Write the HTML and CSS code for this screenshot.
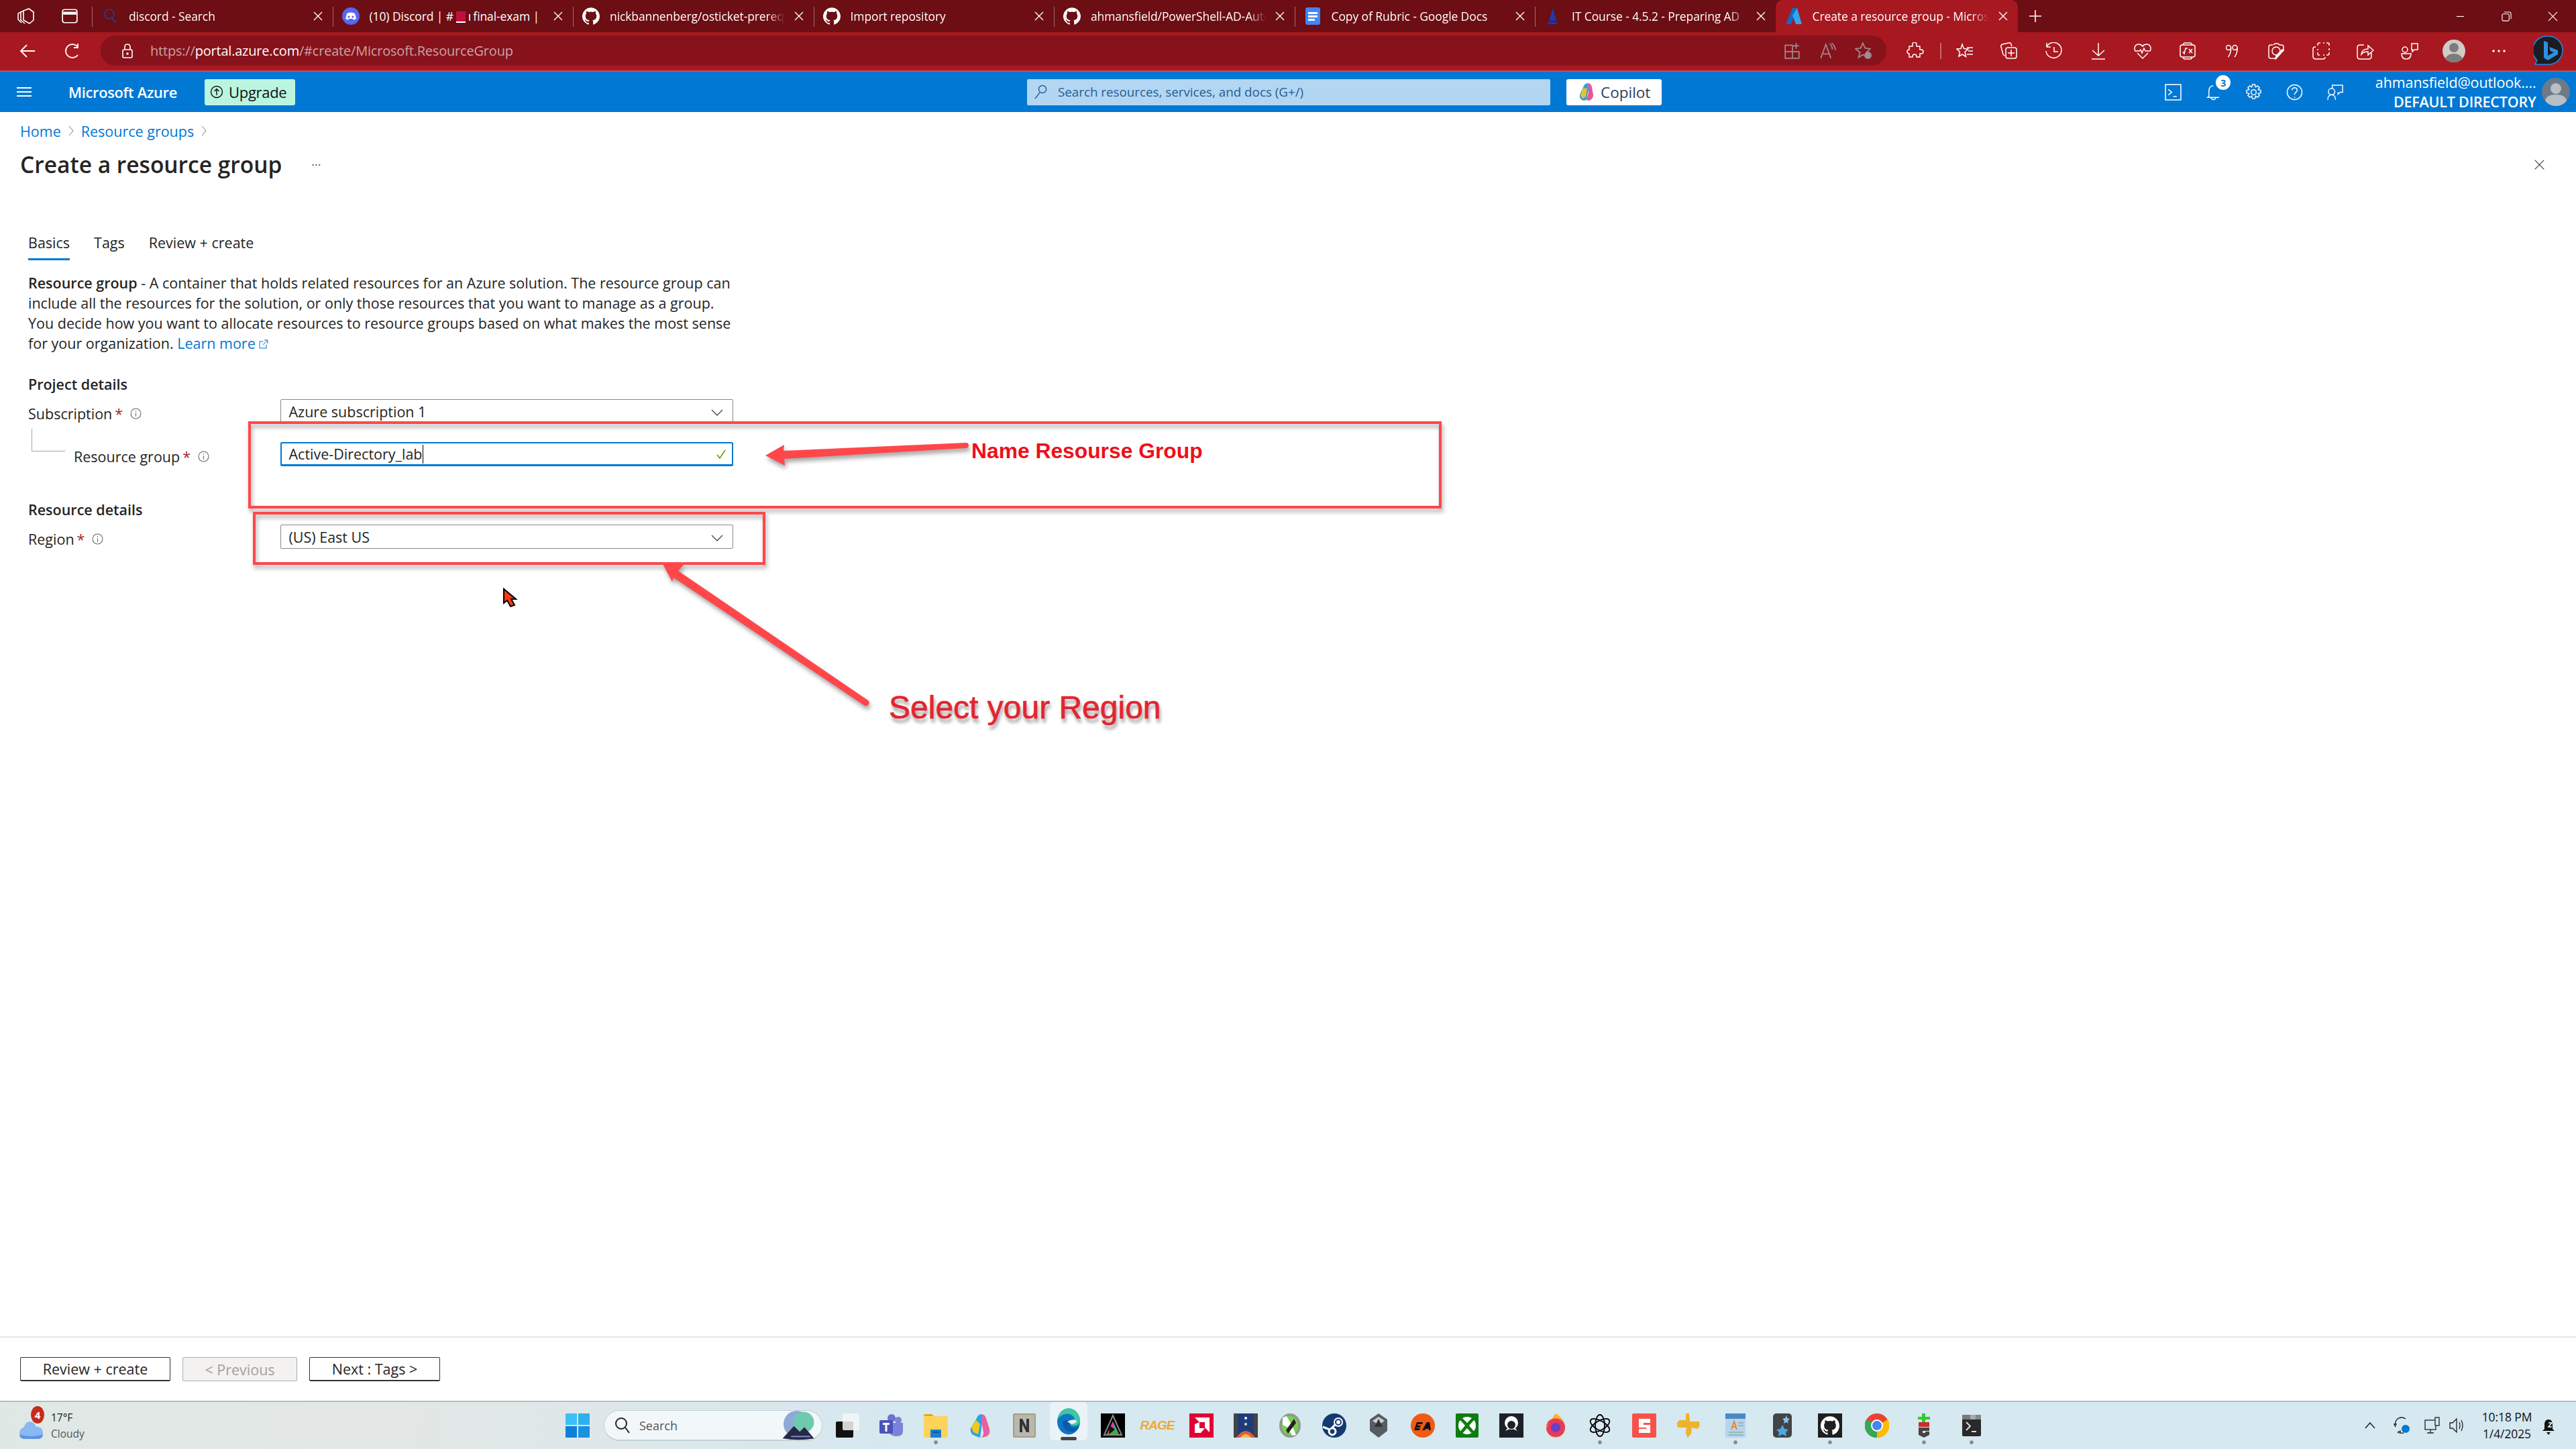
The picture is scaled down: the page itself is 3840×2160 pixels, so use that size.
FILE: index.html
```html
<!DOCTYPE html>
<html lang="en">
<head>
<meta charset="utf-8">
<title>Create a resource group - Microsoft Azure</title>
<link rel="stylesheet" href="styles.css">
</head>
<body>
<svg class="defs" width="0" height="0"><defs>
  <symbol id="gh" viewBox="0 0 24 24"><path fill="#fff" d="M12 .3a12 12 0 0 0-3.800 23.400c.6.100.8-.3.800-.6v-2c-3.300.7-4-1.600-4-1.600-.5-1.400-1.300-1.800-1.300-1.800-1.100-.7.100-.7.100-.7 1.200.1 1.800 1.200 1.800 1.200 1.100 1.800 2.800 1.300 3.500 1 .1-.8.400-1.300.8-1.600-2.700-.3-5.500-1.300-5.500-5.900 0-1.300.5-2.400 1.200-3.200-.1-.3-.5-1.500.1-3.200 0 0 1-.3 3.300 1.200a11.500 11.500 0 0 1 6 0c2.300-1.500 3.300-1.200 3.300-1.200.6 1.700.2 2.900.1 3.200.8.800 1.200 1.900 1.200 3.200 0 4.600-2.800 5.600-5.500 5.900.4.400.8 1.100.8 2.200v3.300c0 .3.200.7.800.6A12 12 0 0 0 12 .3z"/></symbol>
  <symbol id="x" viewBox="0 0 14 14"><path d="M1 1l12 12M13 1L1 13" stroke="#fff" stroke-width="1.400" fill="none"/></symbol>
</defs></svg>
<div class="app">
  <header class="tabstrip">
    <div class="strip-lead">
      <svg class="ic-w" viewBox="0 0 26 24"><path d="M9 4l8-3 7 5v12l-6 5-9-5zM5 6l4-2M5 6v12l6 5M1 8l4-2M1 8v9l5 5"/></svg>
      <svg class="ic-w ic-tabs" viewBox="0 0 24 22"><rect x="2" y="2" width="20" height="18" rx="3"/><path d="M3 7h18" stroke-width="4"/></svg>
    </div>
    <div class="tab">
      <svg class="tab-ic" viewBox="0 0 26 26"><circle cx="12" cy="10" r="7" fill="none" stroke="#2a3a78" stroke-width="2"/><path d="M16 16l6 7" stroke="#2a3a78" stroke-width="2"/></svg>
      <span class="tab-t">discord - Search</span><svg class="tab-x"><use href="#x"/></svg>
    </div>
    <div class="tab">
      <svg class="tab-ic" viewBox="0 0 26 26"><circle cx="13" cy="13" r="13" fill="#5865f2"/><path d="M7 9q6-3 12 0l2 8-4 2-1-2h-6l-1 2-4-2z" fill="#fff"/><circle cx="10" cy="14" r="1.600" fill="#5865f2"/><circle cx="16" cy="14" r="1.600" fill="#5865f2"/></svg>
      <span class="tab-t tab-t-plain">(10) Discord | # <i class="tab-red"></i> <i class="tab-pipe"></i> final-exam |</span><svg class="tab-x"><use href="#x"/></svg>
    </div>
    <div class="tab">
      <svg class="tab-ic" viewBox="0 0 24 24"><use href="#gh"/></svg>
      <span class="tab-t">nickbannenberg/osticket-prereqs</span><svg class="tab-x"><use href="#x"/></svg>
    </div>
    <div class="tab">
      <svg class="tab-ic" viewBox="0 0 24 24"><use href="#gh"/></svg>
      <span class="tab-t">Import repository</span><svg class="tab-x"><use href="#x"/></svg>
    </div>
    <div class="tab">
      <svg class="tab-ic" viewBox="0 0 24 24"><use href="#gh"/></svg>
      <span class="tab-t">ahmansfield/PowerShell-AD-Automation</span><svg class="tab-x"><use href="#x"/></svg>
    </div>
    <div class="tab">
      <svg class="tab-ic" viewBox="0 0 26 26"><rect x="2" y="0" width="22" height="26" rx="3" fill="#4285f4"/><path d="M6 7h14v3H6zM6 12h14v3H6zM6 17h10v3H6z" fill="#fff"/></svg>
      <span class="tab-t">Copy of Rubric - Google Docs</span><svg class="tab-x"><use href="#x"/></svg>
    </div>
    <div class="tab">
      <svg class="tab-ic" viewBox="0 0 26 30"><path d="M13 1l6 22H6z" fill="#1f3aa8"/><path d="M3 25h20l-6 4H5z" fill="#1f3aa8"/></svg>
      <span class="tab-t">IT Course - 4.5.2 - Preparing AD</span><svg class="tab-x"><use href="#x"/></svg>
    </div>
    <div class="tab tab-active">
      <svg class="tab-ic" viewBox="0 0 26 26"><path d="M11 1h7l-9 24H1z" fill="#0f6cc4"/><path d="M18 1l7 24h-9l-5-13z" fill="#2fa6ee"/></svg>
      <span class="tab-t">Create a resource group - Microsoft Azure</span><svg class="tab-x"><use href="#x"/></svg>
    </div>
    <svg class="plus" viewBox="0 0 20 20"><path d="M10 1v18M1 10h18"/></svg>
    <div class="winctl">
      <span class="wc"><svg viewBox="0 0 16 16"><path d="M2 8h12"/></svg></span>
      <span class="wc"><svg viewBox="0 0 16 16"><rect x="1" y="4" width="11" height="11" rx="2"/><path d="M4 1h8q3 0 3 3v8"/></svg></span>
      <span class="wc"><svg viewBox="0 0 16 16"><path d="M1 1l14 14M15 1L1 15"/></svg></span>
    </div>
  </header>

  <nav class="toolbar">
    <svg class="nav-ic back" viewBox="0 0 24 24"><path d="M23 12H2M11 3l-9 9 9 9"/></svg>
    <svg class="nav-ic reload" viewBox="0 0 24 24"><path d="M20 18a10 10 0 1 1 0-12M20 1v6h-6"/></svg>
    <div class="addr">
      <svg class="lock" viewBox="0 0 18 22"><rect x="2" y="9" width="14" height="12" rx="2"/><path d="M5 9V5q0-4 4-4t4 4v4"/><circle cx="9" cy="15" r="1" fill="#fff"/></svg>
      <span class="url"><span class="url-dim">https://</span>portal.azure.com<span class="url-dim">/#create/Microsoft.ResourceGroup</span></span>
      <div class="addr-right">
        <svg class="dim-ic" viewBox="0 0 24 24"><path d="M2 4h10v18H2zM2 13h19v9h-9M17 1v8M13 5h8"/></svg>
        <svg class="dim-ic" viewBox="0 0 24 24"><path d="M2 22L9 3l7 19M5 16h8M14 2q4 3 4 8M17 1q5 4 5 10"/></svg>
        <svg class="dim-ic" viewBox="0 0 24 24"><path d="M11 1l3 7 7 1-5 5 2 7-7-4-6 4 2-7-6-5 7-1z"/><circle cx="18" cy="18" r="5" fill="#a08a8e" stroke="none"/></svg>
      </div>
    </div>
    <div class="tb-ext">
      <svg class="tb-ic" viewBox="0 0 24 24"><path d="M9 2a3 3 0 0 1 6 0v3h5v5h2a3 3 0 0 1 0 6h-2v5h-5v-1a3 3 0 0 0-6 0v1H4v-5a3 3 0 0 1 0-6V5h5z" transform="translate(0 1) scale(.92)"/></svg>
    </div>
    <i class="tb-sep"></i>
    <div class="tb-list">
      <span class="tb-cell"><svg class="tb-ic" viewBox="0 0 26 24"><path d="M9 2l2.500 6.500L18 9l-5 4.500 1.500 7-5.500-3.500-5 3 1.500-6.500L1 9l6-.5zM16 7h9M18 12h7M16 17h9"/></svg></span>
      <span class="tb-cell"><svg class="tb-ic" viewBox="0 0 26 26"><path d="M7 20q-2 0-3-2L1 7q-1-3 2-4l9-2q3-1 4 2l1 3"/><rect x="8" y="8" width="16" height="16" rx="3"/><path d="M16 11v10M11 16h10"/></svg></span>
      <span class="tb-cell"><svg class="tb-ic" viewBox="0 0 26 26"><path d="M2 7a11.500 11.500 0 1 1-1 6M2 1v6h6M13 7v7h6"/></svg></span>
      <span class="tb-cell"><svg class="tb-ic" viewBox="0 0 24 26"><path d="M12 1v19M3 12l9 8 9-8M2 25h20"/></svg></span>
      <span class="tb-cell"><svg class="tb-ic" viewBox="0 0 26 26"><path d="M1 10q0-7 6-7 4 0 6 3 2-3 6-3 6 0 6 7 0 2-1 3h-7l-2-4-3 7-2-5-2 2H2q-1-1-1-3zM5 16l8 8 8-8"/></svg></span>
      <span class="tb-cell"><svg class="tb-ic" viewBox="0 0 26 26"><path d="M6 4q1-3 3-3h8q2 0 3 3M6 22q1 3 3 3h8q2 0 3-3"/><rect x="2" y="4" width="22" height="18" rx="3"/><path d="M6 14l2 3 2-8h3M15 10l5 6M20 10l-5 6"/></svg></span>
      <span class="tb-cell"><svg class="quote" viewBox="0 0 18 20"><path d="M7.500 5a3.500 3.500 0 1 0-3.500 3.500q2 0 3.500-2M7.500 4q1 8-4 15M17 5a3.500 3.500 0 1 0-3.500 3.500q2 0 3.500-2M17 4q1 8-4 15"/></svg></span>
      <span class="tb-cell"><svg class="tb-ic" viewBox="0 0 26 26"><path d="M9 4l2-2h5l2 2h3q3 0 3 3v6M12 24H5q-3 0-3-3V7q0-3 3-3h3"/><circle cx="13" cy="13" r="6"/><path d="M24 12l-9 10-3 3 1-5 9-9z" fill="#fff"/></svg></span>
      <span class="tb-cell"><svg class="tb-ic" viewBox="0 0 26 26"><path d="M8 5V3q0-2 2-2h2M16 1h2M21 1h2q2 0 2 2v2M25 9v3M25 15v2q0 2-2 2h-2M16 19h2M11 19H9q-1 0-1-2v-2M8 10v2M5 7H4Q1 7 1 10v11q0 4 4 4h11q3 0 3-3"/></svg></span>
      <span class="tb-cell"><svg class="tb-ic" viewBox="0 0 26 26"><path d="M11 4H5Q1 4 1 8v13q0 4 4 4h13q4 0 4-4v-5M7 18q1-8 10-8V5l8 7-8 7v-5q-7 0-10 4z"/></svg></span>
      <span class="tb-cell"><svg class="tb-ic" viewBox="0 0 26 26"><path d="M16 2h9v9h-5l-3 3v-3h-1zM1 17h14q0 8-7 8t-7-8z"/><circle cx="6" cy="11" r="4"/></svg></span>
      <span class="tb-cell"><svg class="avatar-s" viewBox="0 0 34 34"><circle cx="17" cy="17" r="17" fill="#cfccc8"/><circle cx="17" cy="12" r="7" fill="#7d7c7a"/><path d="M4 29q3-8 13-8t13 8q-5 5-13 5t-13-5z" fill="#7d7c7a"/></svg></span>
      <span class="tb-cell"><svg class="dots" viewBox="0 0 20 4"><circle cx="2" cy="2" r="1.700"/><circle cx="10" cy="2" r="1.700"/><circle cx="18" cy="2" r="1.700"/></svg></span>
    </div>
    <svg class="bing" viewBox="0 0 44 46"><path d="M22 1a21 21 0 0 1 0 42H2l3-6A21 21 0 0 1 22 1z" fill="#1b1c20" stroke="#1c8ae0" stroke-width="1.500"/><path d="M15 8l6 2v20l9-5-5-2-2-6 13 5v6l-15 9-6-4z" fill="#2c8fe6"/></svg>
  </nav>

  <div class="azurebar">
    <button class="hamb" type="button"><i></i><i></i><i></i></button>
    <span class="brand">Microsoft Azure</span>
    <span class="upgrade"><svg viewBox="0 0 20 20"><circle cx="10" cy="10" r="8.500"/><path d="M10 15V6M6.500 9L10 5.500 13.500 9"/></svg>Upgrade</span>
    <div class="search">
      <svg viewBox="0 0 20 24"><circle cx="12" cy="8" r="5.500"/><path d="M8 13l-7 9"/></svg>
      <span>Search resources, services, and docs (G+/)</span>
    </div>
    <span class="copilot"><svg viewBox="0 0 22 28"><path d="M13 1q5 0 6 6l2 11q0 8-7 9l-3-1 3-11z" fill="#e8559a"/><path d="M13 1Q8 1 6 7L1 18q-1 8 6 9l4-1 3-15z" fill="#2aa0e8"/><path d="M6 8l6 1-2 12-5 3-3-5z" fill="#f0c020"/></svg>Copilot</span>
    <div class="az-icons">
      <span class="az-ic"><svg viewBox="0 0 24 24"><rect x="1" y="1" width="22" height="22"/><path d="M5 8l5 4-5 4M12 18h5"/></svg></span>
      <span class="az-ic bell"><svg viewBox="0 0 24 26"><path d="M12 3q-7 0-7 9v7l-2 2h18M8 22q4 5 8 0"/></svg><b class="count">3</b></span>
      <span class="az-ic"><svg viewBox="0 0 26 26"><path d="M11 1h4l1 4 3-2 3 3-2 3 4 1v4l-4 1 2 3-3 3-3-2-1 4h-4l-1-4-3 2-3-3 2-3-4-1v-4l4-1-2-3 3-3 3 2z"/><circle cx="13" cy="13" r="4"/></svg></span>
      <span class="az-ic"><svg viewBox="0 0 26 26"><circle cx="13" cy="13" r="11.500"/><path d="M9 10q0-4 4-4t4 4q0 2-3 4-1 1-1 3M13 20v1.500"/></svg></span>
      <span class="az-ic"><svg viewBox="0 0 26 26"><path d="M9 7V2h16v11h-4l-3 3v-3M2 25q0-8 6-8t6 8"/><circle cx="8" cy="12" r="5"/></svg></span>
    </div>
    <div class="user"><span class="user-mail">ahmansfield@outlook....</span><span class="user-dir">DEFAULT DIRECTORY</span></div>
    <svg class="avatar" viewBox="0 0 42 42"><circle cx="21" cy="21" r="21" fill="#6e7a88"/><circle cx="21" cy="16" r="8" fill="#b9bfc4"/><path d="M5 34q2-9 16-9t16 9q-6 8-16 8T5 34z" fill="#b9bfc4"/></svg>
  </div>

  <main class="page">
    <div class="crumbs"><a>Home</a><svg viewBox="0 0 8 16"><path d="M1 1l6 7-6 7"/></svg><a>Resource groups</a><svg viewBox="0 0 8 16"><path d="M1 1l6 7-6 7"/></svg></div>
    <div class="titlebar">
      <h1>Create a resource group</h1>
      <span class="more">···</span>
      <svg class="close" viewBox="0 0 20 20"><path d="M2 2l16 16M18 2L2 18"/></svg>
    </div>
    <div class="content">
      <div class="tabs"><span class="t t-on">Basics</span><span class="t">Tags</span><span class="t">Review + create</span></div>
      <p class="intro"><b>Resource group</b> - A container that holds related resources for an Azure solution. The resource group can include all the resources for the solution, or only those resources that you want to manage as a group. You decide how you want to allocate resources to resource groups based on what makes the most sense for your organization. <a>Learn more <svg viewBox="0 0 14 14"><path d="M6 3H1v10h10V8M8 1h5v5M13 1L6 8"/></svg></a></p>
      <h2 class="sec sec-project">Project details</h2>
      <div class="field">
        <label>Subscription <em>*</em> <svg class="info" viewBox="0 0 16 16"><circle cx="8" cy="8" r="7"/><path d="M8 7v5M8 4v1.500"/></svg></label>
        <div class="box"><span>Azure subscription 1</span><svg class="chev" viewBox="0 0 18 10"><path d="M1 1l8 8 8-8"/></svg></div>
      </div>
      <div class="field field-child">
        <label>Resource group <em>*</em> <svg class="info" viewBox="0 0 16 16"><circle cx="8" cy="8" r="7"/><path d="M8 7v5M8 4v1.500"/></svg></label>
        <div class="box box-focus"><span>Active-Directory_lab</span><i class="caret"></i><svg class="check" viewBox="0 0 16 16"><path d="M2 9l4 5 8-12"/></svg></div>
      </div>
      <h2 class="sec sec-resource">Resource details</h2>
      <div class="field">
        <label>Region <em>*</em> <svg class="info" viewBox="0 0 16 16"><circle cx="8" cy="8" r="7"/><path d="M8 7v5M8 4v1.500"/></svg></label>
        <div class="box"><span>(US) East US</span><svg class="chev" viewBox="0 0 18 10"><path d="M1 1l8 8 8-8"/></svg></div>
      </div>
    </div>
    <footer class="actions">
      <button class="btn" type="button">Review + create</button>
      <button class="btn btn-off" type="button">&lt; Previous</button>
      <button class="btn" type="button">Next : Tags &gt;</button>
    </footer>
  </main>

  <div class="taskbar">
    <div class="weather">
      <svg class="cloud" viewBox="0 0 36 34"><path d="M8 32Q0 32 0 23q0-7 7-9 3-11 12-8 5 2 6 7 11 0 11 10 0 9-8 9z" fill="#8ab8f0"/><path d="M8 32Q0 32 0 25q18 6 36 0 0 7-8 7z" fill="#5f93e0"/></svg>
      <b class="wbadge">4</b>
      <div class="wtext"><span>17°F</span><span class="wdim">Cloudy</span></div>
    </div>
    <div class="tb-center">
      <svg class="winlogo" viewBox="0 0 36 36"><path d="M0 1q0-1 1-1h16v17H0z" fill="#3cc0f5"/><path d="M19 0h16q1 0 1 1v16H19z" fill="#2cb0f0"/><path d="M0 19h17v17H1q-1 0-1-1z" fill="#0f7fd8"/><path d="M19 19h17v16q0 1-1 1H19z" fill="#1a90e0"/></svg>
      <div class="tsearch">
        <svg viewBox="0 0 24 26"><circle cx="10" cy="10" r="8"/><path d="M16 16l6 8"/></svg>
        <span>Search</span>
        <svg class="tsearch-art" viewBox="0 0 70 62"><circle cx="32" cy="28" r="28" fill="#8fa8d8"/><circle cx="46" cy="24" r="22" fill="#6fc9b0"/><path d="M2 58l24-26 12 12 10-10 20 24q-32 6-66 0z" fill="#262845"/><path d="M20 54h40" stroke="#7088c8" stroke-width="3"/></svg>
      </div>
      <svg class="taskview" viewBox="0 0 36 36"><rect x="0" y="12" width="26" height="24" rx="2" fill="#111"/><rect x="10" y="0" width="25" height="25" rx="2" fill="#f4f6f6" fill-opacity=".85"/></svg>
    </div>
    <div class="apps">
      <span class="app-i"><svg viewBox="0 0 36 36"><circle cx="28" cy="10" r="5" fill="#7b83d8"/><circle cx="18" cy="7" r="6" fill="#6a72cc"/><path d="M14 14h21v12q0 8-9 8t-12-6z" fill="#7b83d8"/><rect x="0" y="10" width="20" height="20" rx="2" fill="#4b53bc"/><path d="M5 14h10v3h-3.500v10h-3V17H5z" fill="#fff"/></svg></span>
      <span class="app-i run"><svg viewBox="0 0 36 36"><path d="M0 3q0-2 2-2h10l3 3h-15z" fill="#e8a80c"/><rect y="4" width="36" height="32" rx="2" fill="#fcd45c"/><rect x="10" y="24" width="16" height="12" fill="#1a7fd0"/><rect x="13" y="27" width="10" height="2" fill="#0b5aa0"/></svg></span>
      <span class="app-i"><svg viewBox="0 0 36 36"><path d="M20 1q5 0 7 6l5 16q2 10-7 12l-6 1q5-3 4-8l-4-22z" fill="#e860a0"/><path d="M20 1q-5 0-8 8L4 22q-2 9 8 12l6 2 3-22z" fill="#2aa2e8"/><path d="M5 20l7-10 6 6-3 15-7-3z" fill="#f2c81c"/></svg></span>
      <span class="app-i"><svg viewBox="0 0 36 36"><rect x="1" y="0" width="34" height="36" rx="2" fill="#a89c78"/><rect x="3" y="2" width="30" height="32" fill="#b8b8b0"/><path d="M11 8h4l6 12V8h4v20h-4L15 16v12h-4z" fill="#333"/></svg></span>
      <span class="app-i edge"><svg viewBox="0 0 36 40"><ellipse cx="18" cy="20" rx="17" ry="19.500" fill="#0d77c4"/><path d="M18 .5c10 0 17 9 17 18 0 5-4 8-9 8-3 0-5-1-6-3 5 0 7-3 7-6 0-5-5-9-11-9C10 8.500 5 12 1.500 17 3 8 10 .5 18 .5z" fill="#3fc8a0"/><path d="M9 22c0 9 8 15 17 13q5-2 8-8c-3 3-10 4-13 1-2-2-2-6 0-8-5-3-12-2-12 2z" fill="#0b5aa8"/><path d="M16 20q10-5 14-1 0 4-8 5z" fill="#eaf3f8"/></svg><i class="edge-bar"></i></span>
      <span class="app-i"><svg viewBox="0 0 36 36"><rect width="36" height="36" fill="#000"/><path d="M18 3l13 29H5z" fill="none" stroke="#888" stroke-width="2"/><path d="M18 12l9 19H9z" fill="#4a4"/><path d="M9 31l9-19 3 9z" fill="#e838a0"/><path d="M18 12l9 19-6-10z" fill="#28b8e8"/><path d="M13 18l8 6-9 7z" fill="#111"/></svg></span>
      <span class="app-i"><span class="rage">RAGE</span></span>
      <span class="app-i"><svg viewBox="0 0 36 36"><rect width="36" height="36" fill="#e00034"/><path d="M8 6h22v22l-7-7V13h-8z" fill="#fff"/><path d="M8 16l7-3v9h8l-6 7H8z" fill="#fff"/></svg></span>
      <span class="app-i"><svg viewBox="0 0 36 36"><rect width="36" height="36" fill="#1f3c78"/><path d="M0 0h6v36H0zM30 0h6v36h-6z" fill="#444"/><circle cx="18" cy="7" r="2" fill="#fff"/><circle cx="18" cy="16" r="2" fill="#ddd"/><path d="M4 36q14-20 28 0z" fill="#e05c3c"/><path d="M10 36q8-10 16 0z" fill="#f2c04c"/></svg></span>
      <span class="app-i"><svg viewBox="0 0 36 36"><ellipse cx="18" cy="18" rx="16" ry="18" fill="#909a90"/><ellipse cx="18" cy="18" rx="12" ry="14" fill="#7bd04c"/><path d="M7 6l6-2 8 14 6 14-6 1-6-12-8-4z" fill="#fff"/><path d="M24 8l3 6-12 16-3-5z" fill="#222"/></svg></span>
      <span class="app-i"><svg viewBox="0 0 36 36"><circle cx="18" cy="18" r="18" fill="#123a70"/><circle cx="24" cy="13" r="6" fill="none" stroke="#fff" stroke-width="2"/><circle cx="24" cy="13" r="3" fill="#fff"/><path d="M1 20l10 4a5 5 0 1 0 3-2l6-6" fill="none" stroke="#fff" stroke-width="3"/></svg></span>
      <span class="app-i"><svg viewBox="0 0 36 36"><path d="M18 0l13 9v17l-13 10L5 26V9z" fill="#555c64"/><path d="M18 5l9 6-9 6-9-6z" fill="#ccd0d4"/><path d="M18 8l6 12H12z" fill="#333"/></svg></span>
      <span class="app-i"><svg viewBox="0 0 36 36"><circle cx="18" cy="18" r="18" fill="#f05a14"/><path d="M5 25l4-12h9l-1 3h-6l-1 2h5l-1 3H9l-1 1h6l-1 3zM17 25l7-12h4l2 12h-3v-2h-5l-1 2z" fill="#111"/></svg></span>
      <span class="app-i"><svg viewBox="0 0 36 36"><rect x="1" width="34" height="36" rx="2" fill="#107c10"/><circle cx="18" cy="18" r="13" fill="#fff"/><path d="M18 14L9 5l-3 3 9 10-9 11 3 3 9-10 9 10 3-3-9-11 9-10-3-3z" fill="#107c10"/></svg></span>
      <span class="app-i"><svg viewBox="0 0 36 36"><rect width="36" height="36" fill="#1c2027"/><circle cx="18" cy="14" r="10" fill="#fff"/><path d="M9 26l9-11 9 11-9-4z" fill="#fff"/><circle cx="18" cy="17" r="6" fill="#1c2027"/></svg></span>
      <span class="app-i"><svg viewBox="0 0 36 36"><path d="M18 0q14 8 14 22a14 14 0 0 1-28 0Q4 14 8 10q1 3 4 4 0-8 6-14z" fill="#f7b42c"/><circle cx="18" cy="21" r="14" fill="#e63a60"/><path d="M4 22a14 14 0 0 1 24-10 12 12 0 0 0-22 8z" fill="#ff8a1c"/><circle cx="18" cy="21" r="7" fill="#6c3fc0"/></svg></span>
      <span class="app-i run"><svg viewBox="0 0 36 36"><g fill="none" stroke="#000" stroke-width="1.800"><ellipse cx="18" cy="18" rx="7" ry="16"/><ellipse cx="18" cy="18" rx="7" ry="16" transform="rotate(60 18 18)"/><ellipse cx="18" cy="18" rx="7" ry="16" transform="rotate(120 18 18)"/></g></svg></span>
      <span class="app-i"><svg viewBox="0 0 36 36"><rect width="36" height="36" rx="2" fill="#f6524a"/><path d="M10 8h17v6H17v3h10v12H10v-6h11v-2H10z" fill="#fff"/></svg></span>
      <span class="app-i"><svg viewBox="0 0 36 36"><path d="M14 0l5 0 1 12 14 0q2 10-4 11l-7-2-1 9-5 6-3-6 1-9-13 0q-3-8 3-11l9 0z" fill="#eeb32c"/></svg></span>
    </div>
    <div class="apps apps-wide">
      <span class="app-i run"><svg viewBox="0 0 36 36"><rect x="3" width="30" height="36" rx="2" fill="#b8d4ec"/><rect x="3" width="30" height="8" fill="#4a8ac4"/><path d="M12 24l4-12 4 12M13 20h6" fill="none" stroke="#e88a28" stroke-width="2"/><path d="M22 14h8M22 18h8M8 28h22M8 32h22" stroke="#8aa" stroke-width="1.500"/></svg></span>
      <span class="app-i"><svg viewBox="0 0 36 36"><rect x="4" width="28" height="36" rx="5" fill="#444"/><path d="M18 20l3 6 6 1-4 4 1 6-6-3-6 3 1-6-4-4 6-1z" transform="translate(0 -3)" fill="#4aa8e8"/><path d="M24 3l1 4 4 1-3 3 1 4-3-2-4 2 1-4-3-3 4-1z" fill="#8ac4f0"/></svg></span>
      <span class="app-i run"><svg viewBox="0 0 36 36"><rect width="36" height="36" fill="#1f1f1f"/><use href="#gh" x="4" y="4" width="28" height="28"/></svg></span>
      <span class="app-i"><svg viewBox="0 0 36 36"><circle cx="18" cy="18" r="18" fill="#ea4335"/><path d="M18 18L2 9A18 18 0 0 0 18 36z" fill="#34a853"/><path d="M18 18l16-9a18 18 0 0 1-16 27z" fill="#fbbc05"/><circle cx="18" cy="18" r="9" fill="#fff"/><circle cx="18" cy="18" r="7" fill="#4285f4"/></svg></span>
      <span class="app-i run"><svg viewBox="0 0 36 36"><rect x="15" y="0" width="5" height="13" fill="#2ecc2e"/><rect x="9" y="5" width="18" height="4" fill="#2ecc2e"/><rect x="10" y="13" width="16" height="7" fill="#c83030"/><path d="M10 21h16v5h-10v3h4v-2h6v5l-8 4-8-4z" fill="#444"/></svg></span>
      <span class="app-i run"><svg viewBox="0 0 36 36"><rect x="4" y="2" width="28" height="32" rx="2" fill="#2a2a2a"/><rect x="4" y="2" width="12" height="7" fill="#7a7a7a"/><rect x="16" y="2" width="8" height="7" fill="#aaa"/><rect x="24" y="2" width="8" height="7" fill="#888"/><path d="M10 13l6 6-6 6" fill="none" stroke="#ddd" stroke-width="2"/><path d="M18 27h7" stroke="#ddd" stroke-width="2"/></svg></span>
    </div>
    <div class="tray">
      <svg class="tray-chev" viewBox="0 0 16 10"><path d="M1 9l7-8 7 8"/></svg>
      <svg class="tray-ic tray-sync" viewBox="0 0 24 26"><path d="M18 3Q12-1 6 3 1 8 3 15M6 23q4 2 9 1"/><path d="M3 15l-2-4h4M6 23l4-2v4"/><circle cx="18" cy="18" r="6" fill="#0078d4" stroke="none"/></svg>
      <svg class="tray-ic tray-net" viewBox="0 0 24 26"><rect x="1" y="5" width="16" height="14"/><path d="M9 19v5M4 24h10"/><rect x="16" y="1" width="6" height="12" fill="#d6e8f0"/></svg>
      <svg class="tray-ic tray-vol" viewBox="0 0 24 26"><path d="M2 9h4l6-6v20l-6-6H2zM16 8q2 5 0 10M19 5q4 8 0 16"/></svg>
      <div class="clock"><span>10:18 PM</span><span>1/4/2025</span></div>
      <svg class="tray-bell" viewBox="0 0 20 30"><path d="M10 6q-6 0-6 8v6l-3 3h18l-3-3v-6q0-8-6-8z" fill="#111"/><path d="M7 25h6l-3 4z" fill="#111"/><path d="M10 11h5l-5 6h5" stroke="#fff" stroke-width="1.500" fill="none"/></svg>
    </div>
  </div>
</div>

<svg class="marks" viewBox="0 0 3840 2160" aria-hidden="true">
  <g class="marks-red">
    <rect class="mark-box" x="372" y="630" width="1775" height="126"/>
    <rect class="mark-box" x="379" y="765" width="760" height="75"/>
    <path class="mark-fill" d="M1141 679l28-16-1 9 272-12q4 0 4 4t-4 4l-271 16 1 10z"/>
    <path class="mark-fill" d="M988 841l31 1-8 9 283 193q3 3 1 6t-6 2l-285-191-2 6z"/>
  </g>
  <path class="cursor" d="M751 878v21l5-4 5 9 6-2-5-9h7z"/>
</svg>
<div class="note note-name">Name Resourse Group</div>
<div class="note note-region">Select your Region</div>
</body>
</html>
```

FILE: styles.css
```css
* { box-sizing: border-box; }
html, body { margin: 0; padding: 0; width: 3840px; height: 2160px; overflow: hidden; background: #fff; }
body { position: relative; font-family: "Open Sans", "Noto Sans", sans-serif; font-size: 21.500px; color: #252423; }
svg { display: block; flex: none; fill: none; }
.defs { position: absolute; }
.app { display: flex; flex-direction: column; width: 3840px; height: 2160px; }

/* browser tab strip */
.tabstrip { display: flex; align-items: center; height: 48px; background: #6d0d14; flex: none; color: #fff; }
.strip-lead { display: flex; align-items: center; width: 137px; padding-left: 26px; gap: 39px; }
.ic-w { width: 26px; height: 24px; stroke: #fff; stroke-width: 1.600; }
.tab { position: relative; display: flex; align-items: center; width: 358.500px; height: 48px; padding: 0 15px 0 14px; flex: none; }
.tab::before { content: ""; position: absolute; left: 0; top: 10px; height: 30px; width: 1px; background: #a8686c; }
.tab-ic { width: 26px; height: 26px; margin-right: 15px; }
.tab-t { flex: 1; min-width: 0; font-size: 17.500px; letter-spacing: -.1px; white-space: nowrap; overflow: hidden; color: #fff; -webkit-mask-image: linear-gradient(90deg, #000 90%, transparent 100%); mask-image: linear-gradient(90deg, #000 90%, transparent 100%); margin-right: 14px; }
.tab-t-plain { -webkit-mask-image: none; mask-image: none; }
.tab-x { width: 14px; height: 14px; }
.tab-red { display: inline-block; width: 14px; height: 17px; background: #c2103e; vertical-align: -3px; border-bottom: 2px solid #fff; }
.tab-pipe { display: inline-block; width: 2px; height: 10px; background: #ddd; }
.tab-active { width: 361px; background: #a81820; border-radius: 10px 10px 0 0; margin-right: 16px; }
.tab-active::before { display: none; }
.plus { width: 20px; height: 20px; stroke: #fff; stroke-width: 1.600; }
.winctl { display: flex; margin-left: auto; }
.wc { display: flex; align-items: center; justify-content: center; width: 69px; height: 48px; }
.wc svg { width: 15px; height: 15px; stroke: #fff; stroke-width: 1.200; }

/* browser toolbar */
.toolbar { display: flex; align-items: center; height: 59px; padding-bottom: 2px; background: #a81820; border-bottom: 2px solid #c4505a; flex: none; }
.nav-ic { width: 24px; height: 24px; stroke: #fff; stroke-width: 1.800; }
.back { margin-left: 29px; }
.reload { margin-left: 43px; }
.addr { display: flex; align-items: center; width: 2662px; height: 45px; margin-left: 30px; padding-left: 31px; background: #87121b; border-radius: 22px; }
.lock { width: 18px; height: 22px; stroke: #fff; stroke-width: 1.600; }
.url { margin-left: 25px; font-size: 20px; letter-spacing: -.2px; color: #fff; }
.url-dim { color: #c9a3a6; }
.addr-right { display: flex; align-items: center; gap: 27px; margin-left: auto; padding-right: 21px; }
.dim-ic { width: 26px; height: 26px; stroke: #a08a8e; stroke-width: 1.600; }
.tb-ic { width: 26px; height: 26px; stroke: #fff; stroke-width: 1.500; }
.tb-ext { margin-left: 30px; }
.tb-sep { width: 2px; height: 24px; margin: 0 2px 0 24px; background: #c46a70; flex: none; }
.tb-list { display: flex; align-items: center; }
.tb-cell { display: flex; align-items: center; justify-content: center; width: 66.300px; height: 40px; }
.quote { width: 18px; height: 20px; stroke: #fff; stroke-width: 1.500; }
.avatar-s { width: 34px; height: 34px; }
.dots { width: 20px; height: 4px; fill: #fff; }
.bing { width: 44px; height: 46px; margin-left: 19px; }

/* azure header */
.azurebar { display: flex; align-items: center; height: 60px; background: #0078d4; flex: none; color: #fff; }
.hamb { display: flex; flex-direction: column; gap: 4px; width: 22px; margin-left: 25px; padding: 0; border: 0; background: none; }
.hamb i { display: block; height: 2px; background: #fff; }
.brand { margin-left: 55px; font-size: 21.800px; font-weight: 600; letter-spacing: -.3px; width: 203px; white-space: nowrap; }
.upgrade { display: flex; align-items: center; gap: 8px; width: 135px; height: 39px; padding-left: 8px; background: #baf5e0; border-radius: 3px; color: #111; font-size: 22px; font-weight: 500; letter-spacing: -.3px; }
.upgrade svg { width: 20px; height: 20px; stroke: #111; stroke-width: 1.400; }
.search { display: flex; align-items: center; gap: 15px; width: 780px; height: 39px; margin-left: 1091px; padding-left: 11px; background: #b3d6f2; border-radius: 2px; color: #245d97; font-size: 18.800px; }
.search svg { width: 20px; height: 24px; stroke: #245d97; stroke-width: 1.400; }
.copilot { display: flex; align-items: center; gap: 10px; width: 142px; height: 39px; margin-left: 24px; padding-left: 19px; background: #fff; border-radius: 3px; color: #253f60; font-size: 22.500px; font-weight: 500; }
.copilot svg { width: 22px; height: 28px; }
.az-icons { display: flex; margin-left: 732px; }
.az-ic { position: relative; display: flex; align-items: center; justify-content: center; width: 60.300px; height: 40px; }
.az-ic svg { width: 25px; height: 25px; stroke: #fff; stroke-width: 1.500; }
.count { position: absolute; left: 34px; top: -5px; display: flex; align-items: center; justify-content: center; width: 22px; height: 22px; border-radius: 50%; background: #fff; color: #0078d4; font-size: 14px; }
.user { display: flex; flex-direction: column; align-items: flex-end; width: 240px; margin-left: 30px; line-height: 29px; }
.user-mail { font-size: 21.500px; letter-spacing: -.1px; white-space: nowrap; }
.user-dir { font-size: 21.500px; font-weight: 600; white-space: nowrap; letter-spacing: -.2px; }
.avatar { width: 42px; height: 42px; margin-left: 9px; }

/* portal page */
.page { display: flex; flex-direction: column; flex: 1; min-height: 0; }
.crumbs { display: flex; align-items: center; gap: 11px; height: 30px; margin-top: 13px; padding-left: 30px; color: #0078d4; }
.crumbs svg { width: 8px; height: 16px; stroke: #777; stroke-width: 1; }
.titlebar { display: flex; align-items: center; height: 44px; margin-top: 13px; padding: 0 46px 0 30px; }
h1 { margin: 0; font-size: 33.500px; font-weight: 600; color: #252423; white-space: nowrap; }
.more { margin-left: 44px; color: #555; font-size: 18px; }
.close { width: 17px; height: 17px; margin-left: auto; stroke: #333; stroke-width: 1.200; }
.content { padding-left: 42px; }
.tabs { display: flex; gap: 36px; height: 43px; margin-top: 78px; padding-top: 2px; line-height: 30px; }
.t { height: 41px; }
.t-on { border-bottom: 3px solid #0078d4; }
.intro { width: 1048px; margin: 19px 0 0; line-height: 30px; }
.intro b { font-weight: 600; }
.intro a { color: #0078d4; white-space: nowrap; }
.intro a svg { display: inline-block; width: 14px; height: 14px; stroke: #0078d4; stroke-width: 1; }
.sec { margin: 0; font-size: 21.500px; font-weight: 600; line-height: 30px; }
.sec-project { margin-top: 31px; }
.sec-resource { margin-top: 50px; }
.field { position: relative; display: grid; grid-template-columns: 375.500px 675px; grid-template-rows: 36px; margin-top: 7px; }
.field-child { margin-top: 28px; }
.field-child label { padding-left: 68px; }
.field-child::before { content: ""; position: absolute; left: 5px; top: -20px; width: 49px; height: 33px; border-left: 1px solid #a8a8a8; border-bottom: 1px solid #a8a8a8; }
label { display: flex; align-items: center; gap: 7px; height: 36px; margin-top: 3px; }
label em { color: #a4262c; font-style: normal; margin-left: -3px; }
.info { width: 17px; height: 17px; margin-left: 4px; stroke: #666; stroke-width: 1; }
.box { position: relative; display: flex; align-items: center; height: 36px; padding-left: 12px; border: 1px solid #8a8886; border-radius: 2px; background: #fff; }
.box-focus { border: 2px solid #0078d4; border-bottom-width: 3px; padding-left: 11px; }
.caret { width: 1px; height: 28px; background: #000; }
.chev { position: absolute; right: 14px; top: 14px; width: 18px; height: 10px; stroke: #444; stroke-width: 1.300; }
.check { position: absolute; right: 8px; top: 8px; width: 16px; height: 16px; stroke: #57a300; stroke-width: 1.600; }
.actions { display: flex; gap: 18px; height: 96px; margin-top: auto; padding: 29px 0 0 30px; border-top: 2px solid #e6e6e6; }
.btn { height: 36px; padding: 0; font: inherit; font-weight: 500; color: #252423; background: #fff; border: 1px solid #323130; border-bottom-width: 2px; border-radius: 2px; }
.btn:nth-child(1) { width: 224px; }
.btn:nth-child(2) { width: 171px; }
.btn:nth-child(3) { width: 195px; }
.btn-off { background: #f3f2f1; color: #a19f9d; border: 1px solid #b0aeac; }

/* windows taskbar */
.taskbar { display: flex; align-items: center; height: 72px; flex: none; border-top: 2px solid #b4bfc2; background: linear-gradient(90deg, #e0e8e6 0%, #e3e7e5 15%, #d6e8f0 35%, #d6e8f0 100%); }
.weather { position: relative; display: flex; align-items: center; width: 843px; height: 70px; padding-left: 29px; }
.cloud { width: 35px; height: 33px; margin-top: 10px; }
.wbadge { position: absolute; left: 46px; top: 6px; display: flex; align-items: center; justify-content: center; width: 20px; height: 26px; border-radius: 50%; background: #c42b1c; color: #fff; font-size: 15px; }
.wtext { display: flex; flex-direction: column; margin-left: 12px; font-size: 15.500px; line-height: 24px; color: #1a1a1a; }
.wdim { color: #555; }
.tb-center { display: flex; align-items: center; width: 453px; }
.winlogo { width: 36px; height: 36px; }
.tsearch { display: flex; align-items: center; width: 326px; height: 46px; margin-left: 21px; padding-left: 15px; border-radius: 23px; background: #f2f7fa; border: 1px solid #c4d0d4; border-bottom-width: 2px; font-size: 18px; color: #555; }
.tsearch svg { width: 24px; height: 26px; stroke: #222; stroke-width: 2; }
.tsearch span { margin-left: 13px; }
.tsearch .tsearch-art { width: 70px; height: 44px; margin-left: auto; stroke: none; }
.taskview { width: 36px; height: 36px; margin-left: 20px; }
.apps { display: flex; }
.apps-wide { margin-left: 2px; }
.app-i { position: relative; display: flex; align-items: center; justify-content: center; width: 66px; height: 70px; }
.app-i svg { width: 36px; height: 36px; }
.apps-wide .app-i { width: 70.300px; }
.run::after { content: ""; position: absolute; left: calc(50% - 4px); bottom: 6px; width: 8px; height: 8px; border-radius: 50%; background: #808a90; transform: scale(.7); }
.edge { background: #eaf3f8; border-radius: 6px; height: 57px; width: 56px; margin: 0 5px; }
.edge svg { height: 40px; }
.edge-bar { position: absolute; left: calc(50% - 12px); bottom: 0; width: 24px; height: 5px; border-radius: 3px; background: #444; }
.rage { color: #f0a830; font: italic 700 19px "Liberation Sans", sans-serif; letter-spacing: -1px; }
.tray { display: flex; align-items: center; margin-left: auto; padding-right: 31px; }
.tray-chev { width: 16px; height: 10px; stroke: #222; stroke-width: 1.500; margin-right: 27px; }
.tray-ic { width: 24px; height: 26px; stroke: #222; stroke-width: 1.300; }
.tray-sync { margin-right: 22px; }
.tray-net { margin-right: 12px; }
.clock { display: flex; flex-direction: column; align-items: center; width: 100px; margin-left: 13px; font-size: 17.500px; line-height: 25px; color: #111; letter-spacing: -.1px; }
.tray-bell { width: 20px; height: 30px; margin-left: 2px; }

/* screenshot annotations */
.marks { position: absolute; left: 0; top: 0; width: 3840px; height: 2160px; pointer-events: none; }
.marks-red { filter: drop-shadow(2px 5px 3px rgba(0,0,0,.35)); }
.mark-box { fill: none; stroke: #ff474a; stroke-width: 4; }
.mark-fill { fill: #ff474a; }
.cursor { fill: #ff3a10; stroke: #000; stroke-width: 2; }
.note { position: absolute; font-family: "Liberation Sans", Arial, sans-serif; white-space: nowrap; }
.note-name { left: 1448px; top: 652px; font-size: 31.800px; line-height: 40px; font-weight: 700; color: #ee0f1a; }
.note-region { left: 1325px; top: 1026px; font-size: 48px; line-height: 58px; color: #e32530; -webkit-text-stroke: .7px #e32530; text-shadow: 2px 6px 5px rgba(0,0,0,.4); }
```
